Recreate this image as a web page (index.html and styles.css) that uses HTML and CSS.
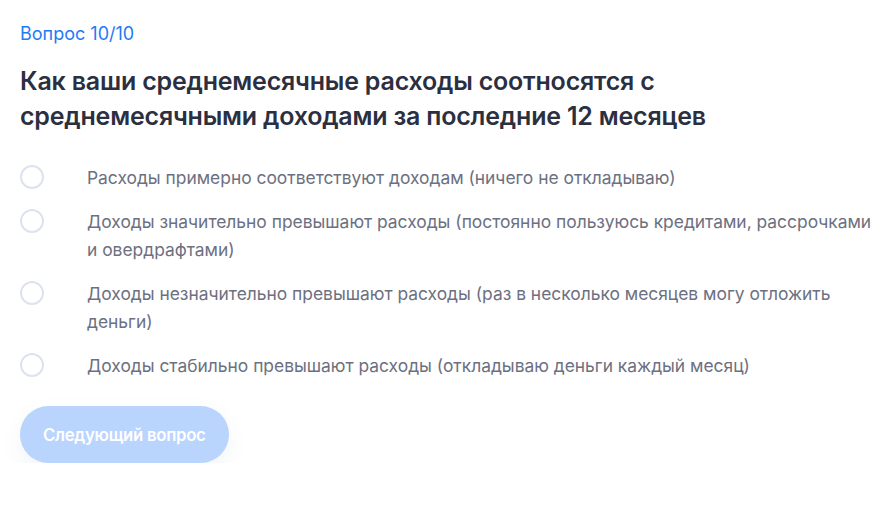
FILE: index.html
```html
<!DOCTYPE html>
<html lang="ru">
<head>
<meta charset="utf-8">
<link rel="stylesheet" href="styles.css">
</head>
<body>
<main class="quiz">
  <div class="counter">Вопрос 10/10</div>
  <h1 class="question">Как ваши среднемесячные расходы соотносятся с<br>среднемесячными доходами за последние 12 месяцев</h1>
  <ul class="options">
    <li class="option"><span class="radio"></span><span class="label">Расходы примерно соответствуют доходам (ничего не откладываю)</span></li>
    <li class="option"><span class="radio"></span><span class="label">Доходы значительно превышают расходы (постоянно пользуюсь кредитами, рассрочками и овердрафтами)</span></li>
    <li class="option"><span class="radio"></span><span class="label">Доходы незначительно превышают расходы (раз в несколько месяцев могу отложить деньги)</span></li>
    <li class="option"><span class="radio"></span><span class="label">Доходы стабильно превышают расходы (откладываю деньги каждый месяц)</span></li>
  </ul>
  <button class="next" disabled>Следующий вопрос</button>
</main>
</body>
</html>
```
FILE: styles.css
```css
* { box-sizing: border-box; }
html, body { margin: 0; padding: 0; background: #fff; }
body { font-family: Inter, "Noto Sans", sans-serif; }
.quiz { padding: 22px 4px 0 20px; display: flex; flex-direction: column; align-items: flex-start; }
.counter { font-size: 18px; line-height: 24px; color: #1f7bf2; font-weight: 400; }
.question { margin: 18px 0 0 0; font-size: 25px; line-height: 35px; font-weight: 600; color: #2b2f3f; letter-spacing: -0.2px; }
.options { list-style: none; margin: 30px 0 0 0; padding: 0; display: flex; flex-direction: column; gap: 16px; }
.option { display: flex; align-items: flex-start; gap: 43px; }
.radio { flex: none; width: 24px; height: 24px; border-radius: 50%; border: 2px solid #dde3ee; margin-top: 1px; background: #fff; }
.label { font-size: 17.4px; line-height: 28px; color: #6c7081; font-weight: 400; }
.next { margin-top: 26px; height: 57px; padding: 0 23px; border: none; border-radius: 29px; background: #b9d4fd; color: #fff; font-family: inherit; font-size: 16.8px; font-weight: 600; letter-spacing: -0.3px; box-shadow: 0 8px 20px rgba(100, 120, 160, 0.08); }
```
